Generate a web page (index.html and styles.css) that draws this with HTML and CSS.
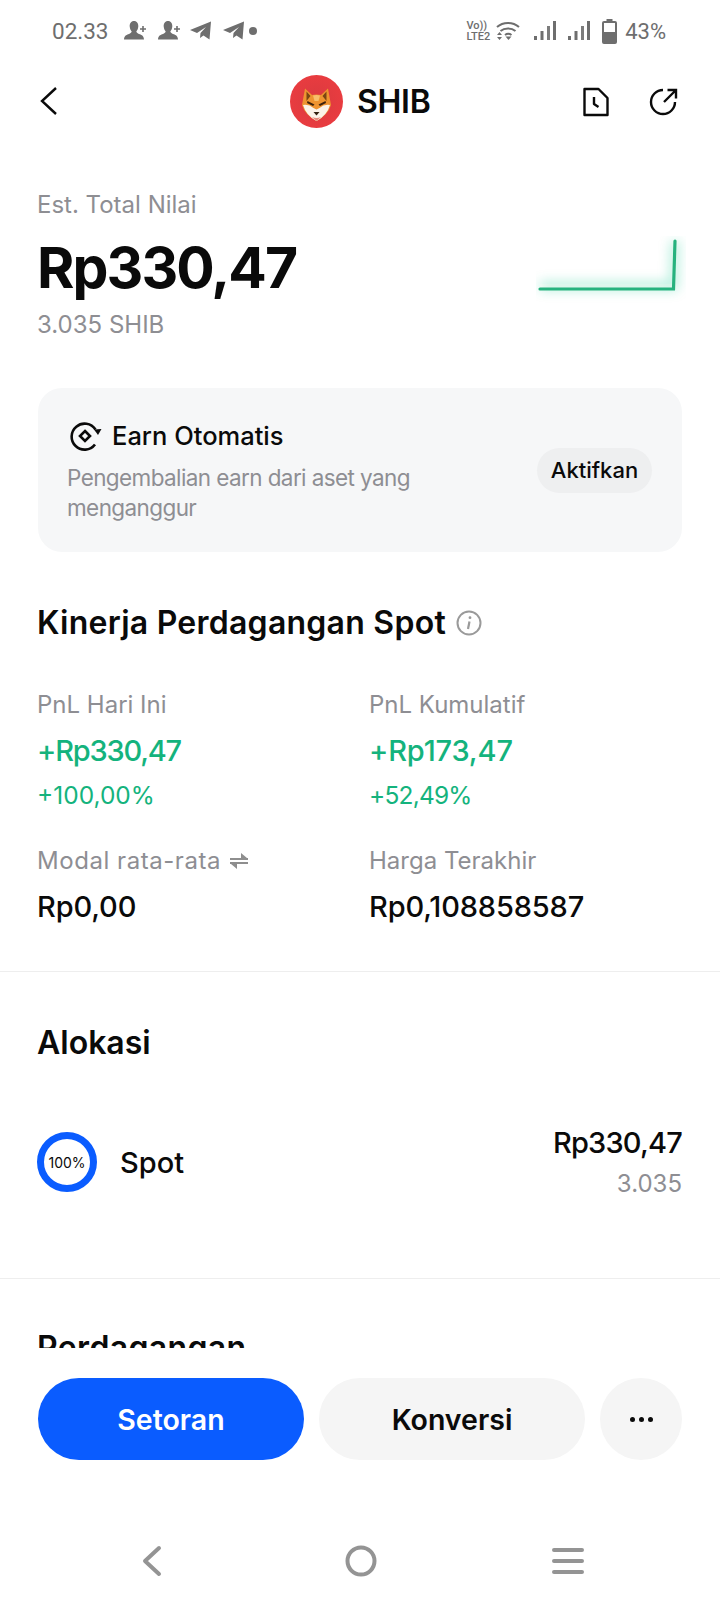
FILE: index.html
```html
<!DOCTYPE html>
<html lang="id">
<head>
<meta charset="utf-8">
<title>SHIB</title>
<link rel="stylesheet" href="styles.css">
</head>
<body>
<div class="page">
  <div class="status">
    <div class="status-left">
      <span class="clock">02.33</span>
      <svg class="st-ic" width="24" height="24" viewBox="0 0 24 24"><path d="M10 2c3 0 4.500 2.500 4.300 5.500-.2 2.300-1 4-2 5 .2 1.300 1.500 2 3.500 2.800 2 .8 4 1.600 4.200 5.200H0c.2-3.600 2.200-4.400 4.200-5.200 2-.8 3.300-1.500 3.500-2.800-1-1-1.800-2.700-2-5C5.500 4.500 7 2 10 2z" fill="#6e6e6e"/><path d="M19 7v6M16 10h6" stroke="#6e6e6e" stroke-width="1.600"/></svg>
      <svg class="st-ic st-gap" width="24" height="24" viewBox="0 0 24 24"><path d="M10 2c3 0 4.500 2.500 4.300 5.500-.2 2.300-1 4-2 5 .2 1.300 1.500 2 3.500 2.800 2 .8 4 1.600 4.200 5.200H0c.2-3.600 2.200-4.400 4.200-5.200 2-.8 3.300-1.500 3.500-2.800-1-1-1.800-2.700-2-5C5.500 4.500 7 2 10 2z" fill="#6e6e6e"/><path d="M19 7v6M16 10h6" stroke="#6e6e6e" stroke-width="1.600"/></svg>
      <svg class="st-ic st-gap3" width="24" height="22" viewBox="0 0 24 22"><path d="M1 10 22 1.500 20.500 19.500l-6-4-3.500 2.500.5-5L17 7l-9 6z" fill="#6e6e6e"/></svg>
      <svg class="st-ic st-gap2" width="24" height="22" viewBox="0 0 24 22"><path d="M1 10 22 1.500 20.500 19.500l-6-4-3.500 2.500.5-5L17 7l-9 6z" fill="#6e6e6e"/></svg>
      <span class="st-dot"></span>
    </div>
    <div class="status-right">
      <span class="volte"><span>Vo))</span><span>LTE2</span></span>
      <svg width="24" height="22" viewBox="0 0 24 22" fill="none" stroke="#6e6e6e" stroke-width="2"><path d="M1 7c6-5.500 16-5.500 22 0M4.500 11c4-3.500 11-3.500 15 0M9 15c2-1.500 4.500-1.500 6.500 0"/><path d="M12.500 20l3-3.500h-6z" fill="#6e6e6e" stroke="none"/><path d="M1 15l2.500-3 2.500 3zM1 17l2.500 3 2.500-3z" fill="#6e6e6e" stroke="none"/></svg>
      <svg class="sig sig1" width="22" height="20" viewBox="0 0 22 20" fill="#6e6e6e"><rect x="0" y="15" width="3" height="4"/><rect x="6.500" y="10" width="3" height="9"/><rect x="13" y="5" width="3" height="14" opacity=".9"/><rect x="19" y="0" width="3" height="19"/></svg>
      <svg class="sig" width="22" height="20" viewBox="0 0 22 20" fill="#6e6e6e"><rect x="0" y="15" width="3" height="4"/><rect x="6.500" y="10" width="3" height="9"/><rect x="13" y="5" width="3" height="14" opacity=".9"/><rect x="19" y="0" width="3" height="19"/></svg>
      <svg class="batt" width="15" height="25" viewBox="0 0 15 25"><path d="M4.500 0h6v2h2.500a2 2 0 0 1 2 2v19a2 2 0 0 1-2 2H2a2 2 0 0 1-2-2V4a2 2 0 0 1 2-2h2.500z" fill="#6e6e6e"/><rect x="2" y="4" width="11" height="9" fill="#fff"/></svg>
      <span class="pct">43%</span>
    </div>
  </div>

  <header class="topbar">
    <svg class="back" width="20" height="32" viewBox="0 0 20 32" fill="none" stroke="#0a0a0a" stroke-width="2.400"><path d="M17 3 3 16l14 13"/></svg>
    <div class="title">
      <svg width="53" height="53" viewBox="0 0 53 53">
        <defs>
          <radialGradient id="red" cx=".5" cy=".5" r=".55"><stop offset="0" stop-color="#d93a3f"/><stop offset="1" stop-color="#ea3c40"/></radialGradient>
        </defs>
        <circle cx="26.500" cy="26.500" r="26.500" fill="url(#red)"/>
        <path d="M15 13.500l7 6.500q4.500-1 9 0l7-6.500 3 16.500q-3 10-14.500 16Q15 40 12 30z" fill="#ee9430"/>
        <path d="M16.500 16.500l4 4.500-4 5zM36.500 16.500l-4 4.500 4 5z" fill="#7a4513"/>
        <path d="M23 20.500q3.500-1 7 0l-1.500 5.500h-4z" fill="#f8bf6b"/>
        <path d="M13 30q6-1 10.500 3l3 1.500 3-1.500q4.500-4 10.500-3-3 10.500-13.500 16Q16 40.500 13 30z" fill="#fbf3e8"/>
        <path d="M17.500 26l7 3.500-1.500 1.500-6-3zM35.500 26l-7 3.500 1.500 1.500 6-3z" fill="#3f230c"/>
        <path d="M23.500 37h6l-3 3.500z" fill="#33200f"/>
        <path d="M22 42q4.500 2 9 0l-4.500 4z" fill="#e68a7c"/>
      </svg>
      <span class="coin">SHIB</span>
    </div>
    <div class="top-actions">
      <svg width="28" height="30" viewBox="0 0 28 30" fill="none" stroke="#0a0a0a" stroke-width="2.400" stroke-linejoin="round"><path d="M2.500 2h14l9 9v17h-23z"/><path d="M12 10v7l4.500 3"/></svg>
      <svg width="30" height="30" viewBox="0 0 30 30" fill="none" stroke="#0a0a0a" stroke-width="2.400"><path d="M26 15a12 12 0 1 1-12-12"/><path d="M15 15 27 3M18.500 3H27v8.500"/></svg>
    </div>
  </header>

  <main class="scroll">
    <section class="total">
      <div class="total-text">
        <div class="muted total-label">Est. Total Nilai</div>
        <div class="total-value">Rp330,47</div>
        <div class="muted total-sub">3.035 SHIB</div>
      </div>
      <svg class="spark" width="150" height="70" viewBox="0 0 150 70" fill="none">
        <defs>
          <filter id="soft" x="-30%" y="-60%" width="160%" height="220%"><feGaussianBlur stdDeviation="6"/></filter>
        </defs>
        <path class="spark-glow" d="M4 50h133.500L139 5" filter="url(#soft)"/>
        <path class="spark-line" d="M4 53h133.500L139 5"/>
      </svg>
    </section>

    <section class="earn">
      <div class="earn-text">
        <div class="earn-title">
          <svg width="34" height="32" viewBox="0 0 34 32" fill="none" stroke="#0a0a0a" stroke-width="2.600"><path d="M26.500 9.500A13 13 0 1 0 26 24.500"/><path d="M25 9.500l7.500-.5-3.500 6z" fill="#0a0a0a" stroke="none"/><path d="M16 11l5 5-5 5-5-5z"/></svg>
          <span>Earn Otomatis</span>
        </div>
        <p class="earn-desc">Pengembalian earn dari aset yang menganggur</p>
      </div>
      <span class="pill">Aktifkan</span>
    </section>

    <section class="perf">
      <h2 class="heading heading-perf">Kinerja Perdagangan Spot
        <svg width="26" height="26" viewBox="0 0 26 26" fill="none" stroke="#9a9a9a"><circle cx="13" cy="13" r="11.500" stroke-width="2"/><path d="M13.500 11.500 12 19" stroke-width="2.200"/><circle cx="14" cy="7.700" r="1.400" fill="#9a9a9a" stroke="none"/></svg>
      </h2>
      <div class="grid">
        <div class="cell">
          <div class="muted label">PnL Hari Ini</div>
          <div class="big up tight">+Rp330,47</div>
          <div class="pct-up up">+100,00%</div>
        </div>
        <div class="cell">
          <div class="muted label">PnL Kumulatif</div>
          <div class="big up">+Rp173,47</div>
          <div class="pct-up up pct-narrow">+52,49%</div>
        </div>
        <div class="cell cell-low">
          <div class="muted label label-wide">Modal rata-rata
            <svg width="20" height="18" viewBox="0 0 20 18" fill="#8e8e8e"><path d="M1 6h18v2H1zM12 1l6 5h-6zM1 10h18v2H1zM8 17l-6-5h6z"/></svg>
          </div>
          <div class="big dark">Rp0,00</div>
        </div>
        <div class="cell cell-low">
          <div class="muted label">Harga Terakhir</div>
          <div class="big dark">Rp0,108858587</div>
        </div>
      </div>
    </section>

    <section class="alloc">
      <h2 class="heading">Alokasi</h2>
      <div class="alloc-row">
        <div class="ring"><span>100%</span></div>
        <span class="spot">Spot</span>
        <div class="alloc-val">
          <div class="big dark alloc-amount">Rp330,47</div>
          <div class="muted alloc-sub">3.035</div>
        </div>
      </div>
    </section>

    <section class="trade">
      <h2 class="heading heading-trade">Perdagangan</h2>
    </section>
  </main>

  <div class="actions">
    <button class="btn btn-primary">Setoran</button>
    <button class="btn btn-grey">Konversi</button>
    <button class="btn-more"><span></span><span></span><span></span></button>
  </div>

  <nav class="sysnav">
    <svg width="24" height="32" viewBox="0 0 24 32" fill="none" stroke="#949494" stroke-width="4" stroke-linecap="round" stroke-linejoin="round"><path d="M19 3 5 16l14 13"/></svg>
    <svg class="nav-home" width="32" height="32" viewBox="0 0 32 32" fill="none" stroke="#949494" stroke-width="4"><circle cx="16" cy="16" r="13.500"/></svg>
    <svg width="32" height="28" viewBox="0 0 32 28" fill="none" stroke="#949494" stroke-width="4" stroke-linecap="round"><path d="M2 3h28M2 14h28M2 25h28"/></svg>
  </nav>
</div>
</body>
</html>
```

FILE: styles.css
```css
* { box-sizing: border-box; }
html, body { margin: 0; padding: 0; background: #fff; }
body { font-family: Inter, "Liberation Sans", sans-serif; color: #0a0a0a; }
.page { width: 720px; height: 1600px; display: flex; flex-direction: column; overflow: hidden; }

.status { height: 62px; flex: none; display: flex; justify-content: space-between; align-items: center; padding: 0 54px 0 52px; color: #6e6e6e; font-family: Roboto, sans-serif; }
.status-left, .status-right { display: flex; align-items: center; }
.clock { font-size: 22.500px; margin-right: 15px; }
.st-gap { margin-left: 10px; }
.st-gap3 { margin-left: 7px; }
.st-gap2 { margin-left: 9px; }
.st-dot { width: 8px; height: 8px; border-radius: 50%; background: #6e6e6e; margin-left: 3px; }
.volte { display: flex; flex-direction: column; font-size: 11px; line-height: 11px; font-weight: 500; margin-right: 6px; }
.sig { margin-left: 12px; }
.sig1 { margin-left: 14px; }
.batt { margin-left: 12px; }
.pct { font-size: 22px; margin-left: 8px; }

.topbar { height: 78px; flex: none; display: flex; align-items: center; justify-content: space-between; padding: 0 38px; }
.back { margin-left: 1px; }
.title { display: flex; align-items: center; gap: 14px; margin-left: 231px; }
.coin { font-size: 32px; font-weight: 600; letter-spacing: -.3px; }
.top-actions { display: flex; align-items: center; gap: 39px; margin-left: auto; padding: 2px 3px 0 0; }

.scroll { height: 1208px; flex: none; overflow: hidden; }
.muted { color: #8e8e93; }

.total { display: flex; justify-content: space-between; padding: 50px 38px 0 37px; height: 248px; }
.total-label { font-size: 24px; line-height: 30px; }
.total-value { font-size: 57px; line-height: 72px; font-weight: 700; letter-spacing: -1.900px; margin-top: 12px; }
.total-sub { font-size: 24px; line-height: 30px; margin-top: 6px; }
.spark { margin: 46px -4px 0 0; }
.spark-line { stroke: #26b27e; stroke-width: 3.200; stroke-linecap: round; }
.spark-glow { stroke: #22c98b; stroke-width: 8; stroke-opacity: .32; }

.earn { margin: 0 38px; height: 164px; background: #f6f7f8; border-radius: 24px; padding: 0 30px 0 29px; display: flex; justify-content: space-between; align-items: center; }
.earn-text { width: 400px; margin-top: 3px; }
.earn-title { display: flex; align-items: center; gap: 9px; font-size: 25.500px; font-weight: 500; line-height: 32px; margin-left: 2px; }
.earn-desc { margin: 11px 0 0; font-size: 22.500px; line-height: 30px; letter-spacing: -.6px; color: #8e8e93; }
.pill { background: #eeeff0; border-radius: 24px; height: 45px; width: 115px; display: flex; align-items: center; justify-content: center; font-size: 22px; font-weight: 500; }

.perf { padding: 51px 38px 0 37px; height: 420px; border-bottom: 1px solid #eeeeee; }
.heading { margin: 0; font-size: 32px; font-weight: 600; line-height: 40px; }
.heading-perf { display: flex; align-items: center; gap: 10px; letter-spacing: .25px; }
.heading-trade { letter-spacing: .35px; }
.grid { display: grid; grid-template-columns: 332px 1fr; margin-top: 47px; }
.label { font-size: 24px; line-height: 30px; display: flex; align-items: center; gap: 8px; }
.label-wide { letter-spacing: .55px; }
.big { font-size: 29px; line-height: 36px; font-weight: 500; letter-spacing: -.15px; }
.tight { letter-spacing: -1.200px; }
.alloc-amount { letter-spacing: -.8px; }
.cell .big { margin-top: 13px; }
.up { color: #14b37d; }
.dark { color: #0a0a0a; }
.pct-up { font-size: 24.500px; line-height: 30px; margin-top: 11px; }
.pct-narrow { letter-spacing: -.8px; }
.cell-low { margin-top: 36px; }

.alloc { padding: 51px 38px 0 37px; height: 307px; border-bottom: 1px solid #eeeeee; }
.alloc-row { display: flex; align-items: center; margin-top: 62px; }
.ring { width: 60px; height: 60px; border-radius: 50%; border: 7px solid #0a5cff; display: flex; align-items: center; justify-content: center; flex: none; }
.ring span { font-size: 14px; white-space: nowrap; }
.spot { font-size: 29px; font-weight: 500; margin-left: 23px; }
.alloc-val { margin-left: auto; text-align: right; }
.alloc-sub { font-size: 24px; line-height: 30px; margin-top: 8px; }

.trade { padding: 49px 38px 0 37px; }

.actions { flex: none; display: flex; gap: 15px; padding: 30px 38px 0; height: 184px; }
.btn, .btn-more { border: 0; height: 82px; border-radius: 41px; font-family: inherit; font-size: 28.500px; font-weight: 600; }
.btn { width: 266px; }
.btn-primary { background: #0a5cff; color: #fff; }
.btn-grey { background: #f5f5f5; color: #0a0a0a; }
.btn-more { width: 82px; background: #f5f5f5; display: flex; align-items: center; justify-content: center; gap: 4px; }
.btn-more span { width: 5px; height: 5px; border-radius: 50%; background: #0a0a0a; }

.sysnav { flex: none; display: flex; justify-content: space-between; align-items: center; height: 58px; padding: 0 136px 0 140px; }
.nav-home { margin-left: 6px; }
```
